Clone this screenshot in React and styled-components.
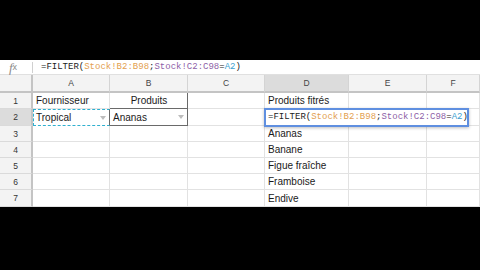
import React from "react";
import styled, { createGlobalStyle } from "styled-components";

const Global = createGlobalStyle`
  html, body { margin: 0; padding: 0; background: #000; }
  body { width: 480px; height: 270px; overflow: hidden; }
  * { box-sizing: border-box; }
`;

const Page = styled.div`
  display: flex;
  flex-direction: column;
  width: 480px;
  height: 270px;
  background: #000;
`;

const TopBand = styled.div`
  height: 60px;
  background: #000;
  flex: none;
`;

const Sheet = styled.div`
  background: #fff;
  flex: none;
  display: flex;
  flex-direction: column;
`;

const FormulaBar = styled.div`
  height: 15px;
  display: flex;
  align-items: center;
  border-bottom: 1px solid #e0e0e0;
  background: #fff;
`;

const FxIcon = styled.div`
  width: 33px;
  height: 11px;
  display: flex;
  align-items: center;
  justify-content: center;
  border-right: 1px solid #d0d0d0;
  font-family: "Liberation Serif", serif;
  font-style: italic;
  font-size: 13px;
  color: #8a8a8a;
  line-height: 1;
  padding-right: 6px;
  sub { font-size: 9px; vertical-align: -1px; font-style: normal; font-family: "Liberation Sans", sans-serif; }
`;

const FormulaText = styled.div`
  padding-left: 8px;
  font-family: "Liberation Mono", monospace;
  font-size: 9px;
  color: #222;
  white-space: nowrap;
  line-height: 1;
`;

const Tok = styled.span`
  color: ${(p) => p.$c || "#222"};
`;

const Grid = styled.div`
  position: relative;
  display: grid;
  grid-template-columns: 33px 77px 78px 77px 84px 78px 1fr;
  grid-template-rows: 18px 16px 17px 16px 16px 16px 16px 17px;
`;

const Corner = styled.div`
  background: #f3f3f3;
  border-right: 2px solid #c4c4c4;
  border-bottom: 2px solid #c4c4c4;
`;

const ColHead = styled.div`
  background: ${(p) => (p.$active ? "#dcdcdc" : "#f3f3f3")};
  border-right: 1px solid #d4d4d4;
  border-bottom: 2px solid #c4c4c4;
  display: flex;
  align-items: center;
  justify-content: center;
  font-family: "Liberation Sans", Arial, sans-serif;
  font-size: 8.5px;
  color: #444;
`;

const RowHead = styled.div`
  background: ${(p) => (p.$active ? "#dcdcdc" : "#f3f3f3")};
  border-right: 2px solid #c4c4c4;
  border-bottom: 1px solid #dadada;
  display: flex;
  align-items: center;
  justify-content: center;
  font-family: "Liberation Sans", Arial, sans-serif;
  font-size: 8.5px;
  color: #333;
`;

const Cell = styled.div`
  position: relative;
  border-right: 1px solid ${(p) => (p.$strong ? "#6a6a6a" : "#e2e2e2")};
  border-bottom: 1px solid ${(p) => (p.$strongB ? "#6a6a6a" : "#e2e2e2")};
  display: flex;
  align-items: center;
  justify-content: ${(p) => (p.$center ? "center" : "flex-start")};
  padding: 0 2px 0 3px;
  font-family: "Liberation Sans", Arial, sans-serif;
  font-size: 10px;
  color: #1a1a1a;
  white-space: nowrap;
  ${(p) =>
    p.$marquee &&
    `
    border: 1px dashed #2fb0d0;
    border-right: 1px solid #6a6a6a;
    padding-left: 2px;
  `}
`;

const Arrow = styled.span`
  position: absolute;
  right: 3px;
  top: 50%;
  transform: translateY(-50%);
  width: 0;
  height: 0;
  border-left: 3px solid transparent;
  border-right: 3px solid transparent;
  border-top: 4px solid #bdbdbd;
`;

const EditBox = styled.div`
  position: absolute;
  left: 264px;
  top: 33px;
  width: 205px;
  height: 19px;
  border: 2px solid #5f8fe0;
  background: #fff;
  box-shadow: 0 1px 3px rgba(0, 0, 0, 0.25);
  display: flex;
  align-items: center;
  padding-left: 2px;
  font-family: "Liberation Mono", monospace;
  font-size: 9px;
  color: #222;
  white-space: nowrap;
  line-height: 1;
`;

const Caret = styled.span`
  display: inline-block;
  width: 1px;
  height: 11px;
  background: #000;
  margin-left: 1px;
`;

const cols = ["A", "B", "C", "D", "E", "F"];
const dList = ["Ananas", "Banane", "Figue fraîche", "Framboise", "Endive"];

function Formula() {
  return (
    <>
      <Tok>=FILTER(</Tok>
      <Tok $c="#e3a04f">Stock!B2:B98</Tok>
      <Tok>;</Tok>
      <Tok $c="#8e5fa8">Stock!C2:C98</Tok>
      <Tok>=</Tok>
      <Tok $c="#3d9fd0">A2</Tok>
      <Tok>)</Tok>
    </>
  );
}

export default function App() {
  const rows = [];
  for (let r = 1; r <= 7; r++) {
    const cells = [];
    cells.push(
      <RowHead key={`h${r}`} $active={r === 2}>
        {r}
      </RowHead>
    );
    if (r === 1) {
      cells.push(<Cell key="a">Fournisseur</Cell>);
      cells.push(
        <Cell key="b" $center $strong $strongB>
          Produits
        </Cell>
      );
    } else if (r === 2) {
      cells.push(
        <Cell key="a" $marquee>
          Tropical
          <Arrow />
        </Cell>
      );
      cells.push(
        <Cell key="b" $strong $strongB>
          Ananas
          <Arrow />
        </Cell>
      );
    } else {
      cells.push(<Cell key="a" />);
      cells.push(<Cell key="b" />);
    }
    cells.push(<Cell key="c" />);
    let d = "";
    if (r === 1) d = "Produits fitrés";
    else if (r >= 3) d = dList[r - 3];
    cells.push(<Cell key="d">{d}</Cell>);
    cells.push(<Cell key="e" />);
    cells.push(<Cell key="f" />);
    rows.push(<React.Fragment key={r}>{cells}</React.Fragment>);
  }

  return (
    <>
      <Global />
      <Page>
        <TopBand />
        <Sheet>
          <FormulaBar>
            <FxIcon>
              f<sub>x</sub>
            </FxIcon>
            <FormulaText>
              <Formula />
            </FormulaText>
          </FormulaBar>
          <Grid>
            <Corner />
            {cols.map((c) => (
              <ColHead key={c} $active={c === "D"}>
                {c}
              </ColHead>
            ))}
            {rows}
            <EditBox>
              <Formula />
              <Caret />
            </EditBox>
          </Grid>
        </Sheet>
      </Page>
    </>
  );
}
